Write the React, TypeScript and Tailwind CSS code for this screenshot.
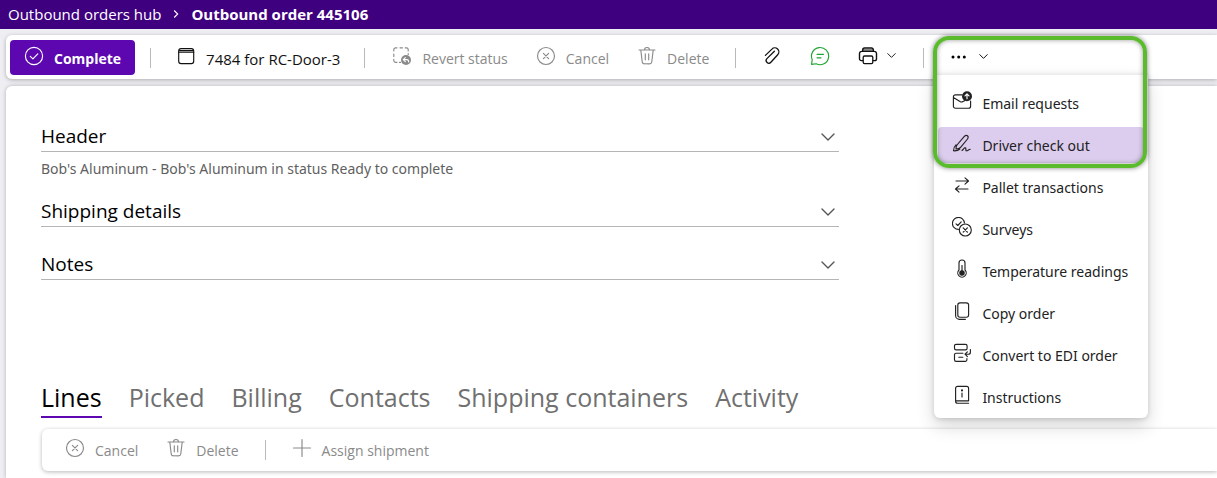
import type { ReactNode } from "react";

function Icon({ children }: { children: ReactNode }) {
  return (
    <svg
      viewBox="0 0 20 20"
      fill="none"
      stroke="currentColor"
      strokeWidth="1.15"
      strokeLinecap="round"
      strokeLinejoin="round"
      aria-hidden="true"
      className="h-5 w-5 shrink-0"
    >
      {children}
    </svg>
  );
}

function Chevron({ className = "" }: { className?: string }) {
  return (
    <svg viewBox="0 0 14 8" fill="none" stroke="currentColor" strokeLinecap="round" strokeLinejoin="round" aria-hidden="true" className={`shrink-0 ${className}`}>
      <path d="M1 1l6 6 6-6" />
    </svg>
  );
}

const CancelIcon = () => (
  <Icon>
    <circle cx="10" cy="10" r="8.5" />
    <path d="M7.4 7.4l5.2 5.2M12.6 7.4l-5.2 5.2" />
  </Icon>
);

const TrashIcon = () => (
  <Icon>
    <path d="M2 4h16M7.5 4a2.5 2.5 0 0 1 5 0M3.8 4l1.4 11.7a2.4 2.4 0 0 0 2.4 2.1h4.8a2.4 2.4 0 0 0 2.4-2.1L16.2 4M8.3 7.8v6M11.7 7.8v6" />
  </Icon>
);

function Divider() {
  return <span className="h-5 w-px shrink-0 bg-[#b9b9b9]" />;
}

function Tool({ icon, label, disabled = false }: { icon: ReactNode; label: string; disabled?: boolean }) {
  return (
    <button
      type="button"
      disabled={disabled}
      className={`flex shrink-0 items-center gap-[10px] whitespace-nowrap ${disabled ? "text-[#8a8a8a]" : "text-[15px] text-[#111]"}`}
    >
      <span className="pb-1">{icon}</span>
      <span className="pt-0.5">{label}</span>
    </button>
  );
}

const menu: { label: string; icon: ReactNode; active?: boolean }[] = [
  {
    label: "Email requests",
    icon: (
      <Icon>
        <path d="M10 3.8H3.4a2 2 0 0 0-2 2v9.4a2 2 0 0 0 2 2h13.2a2 2 0 0 0 2-2V10M1.4 6.5l6.6 4.1a3 3 0 0 0 3 0l2-1.2" />
        <circle cx="15" cy="5.2" r="5" fill="currentColor" stroke="none" />
        <path d="M15 7.7V2.9M13 4.9l2-2 2 2" stroke="white" />
      </Icon>
    ),
  },
  {
    label: "Driver check out",
    active: true,
    icon: (
      <Icon>
        <path d="M5 12l7.3-8.6c2.4-2.4 5-.2 3.2 2.6l-6.9 8.3c-1.2 1.4-2.6 1.6-4.6 1.7 0-1.8 0-2.7 1-4zM4 11.8c-1.6 1.5-2.5 3.4-2.5 6 3 .2 5-.5 6.3-1.800M10 17.5c1.4-1 2-2.9 3.3-2.8 1.4.2-.3 3 1.3 3.1 1.2 0 1.8-1.2 3.6-1.5" />
      </Icon>
    ),
  },
  {
    label: "Pallet transactions",
    icon: (
      <Icon>
        <path d="M4 6h12.5M13 2.8L16.5 6 13 9.2M16 14H3.5M7 10.8L3.5 14 7 17.2" />
      </Icon>
    ),
  },
  {
    label: "Surveys",
    icon: (
      <Icon>
        <path d="M6.4 12.4A6 6 0 1 1 12.4 6M4 6.8l1.8 1.7 3.4-3.7" />
        <circle cx="13.3" cy="13" r="6" />
        <path d="M11.2 10.9l4.2 4.2M15.4 10.9l-4.2 4.2" />
      </Icon>
    ),
  },
  {
    label: "Temperature readings",
    icon: (
      <Icon>
        <path d="M7 11V4a3 3 0 0 1 6 0v7a4.2 4.2 0 1 1-6 0z" />
        <circle cx="10" cy="14" r="2.2" fill="currentColor" />
        <path d="M10 13V6.5" />
      </Icon>
    ),
  },
  {
    label: "Copy order",
    icon: (
      <Icon>
        <rect x="5.8" y="1.8" width="10.8" height="14.4" rx="2.2" />
        <path d="M3.6 4.5v10a3.8 3.8 0 0 0 3.8 3.8h6" />
      </Icon>
    ),
  },
  {
    label: "Convert to EDI order",
    icon: (
      <Icon>
        <rect x="2.5" y="1.3" width="12.6" height="5.6" rx="1.6" />
        <path d="M11 10.2H4.1a1.6 1.6 0 0 0-1.6 1.6v5a1.6 1.6 0 0 0 1.6 1.6h9.2a1.6 1.6 0 0 0 1.6-1.6v-1.3M6.8 14.2h4M18.4 6.5v2.7a2 2 0 0 1-2 2h-3.2M15.4 8.8L13 11.2l2.4 2.4" />
      </Icon>
    ),
  },
  {
    label: "Instructions",
    icon: (
      <Icon>
        <path d="M3.6 16.2V3.4a2 2 0 0 1 2-2h9a2 2 0 0 1 2 2v12.4h-13M3.6 16.2a2 2 0 0 0 2 2h11M10 8v4" />
        <circle cx="10" cy="5.4" r="0.5" fill="currentColor" />
      </Icon>
    ),
  },
];

function MoreMenu() {
  return (
    <div className="relative flex shrink-0 items-center self-stretch">
      <div className="absolute -left-[17px] top-[38px] z-10 w-[214px] rounded-b-md border-t border-[#ececec] bg-white pb-[3px] pt-[10px] shadow-[0_8px_18px_rgba(0,0,0,0.16),0_1px_5px_rgba(0,0,0,0.14)]">
        <ul className="flex flex-col gap-[6px]">
          {menu.map((item) => (
            <li key={item.label} className="px-1">
              <button
                type="button"
                className={`flex h-9 w-full items-center gap-[10px] whitespace-nowrap rounded pl-[14px] font-['Noto_Sans','Open_Sans',sans-serif] text-[#222] ${item.active ? "bg-[#dccdee]" : ""}`}
              >
                <span className="pb-1">{item.icon}</span>
                <span className="pt-0.5">{item.label}</span>
              </button>
            </li>
          ))}
        </ul>
      </div>
      <div className="pointer-events-none absolute -left-[18px] top-0 z-20 h-[132px] w-[214px] rounded-2xl border-4 border-[#5abb2c] shadow-[0_0_5px_rgba(0,0,0,0.5),inset_0_0_5px_rgba(0,0,0,0.4)]" />
      <button type="button" aria-label="More actions" aria-expanded="true" className="flex items-center gap-3 pb-[2px] text-black">
        <svg viewBox="0 0 16 4" fill="currentColor" aria-hidden="true" className="h-1 w-4">
          <circle cx="2" cy="2" r="1.5" />
          <circle cx="7.7" cy="2" r="1.5" />
          <circle cx="13.3" cy="2" r="1.5" />
        </svg>
        <Chevron className="h-[5px] w-[9px] stroke-[1.5]" />
      </button>
    </div>
  );
}

function Section({ title, children }: { title: string; children?: ReactNode }) {
  return (
    <section>
      <h2>
        <button type="button" className="flex h-[30px] w-full items-center justify-between border-b border-[#b5b5b5] pr-1 text-[19px] leading-none text-black">
          <span>{title}</span>
          <Chevron className="h-2 w-[14px] stroke-[1.4] text-[#555]" />
        </button>
      </h2>
      {children}
    </section>
  );
}

const tabs = ["Lines", "Picked", "Billing", "Contacts", "Shipping containers", "Activity"];

export default function App() {
  return (
    <div className="flex min-h-screen flex-col overflow-hidden bg-[#efeef3] font-['Open_Sans','Noto_Sans',sans-serif] text-[14px] leading-5">
      <nav aria-label="Breadcrumb" className="flex h-[29px] items-center bg-[#3f007f] pb-0.5 pl-2 text-[15px] text-white">
        <a href="#hub">Outbound orders hub</a>
        <svg viewBox="0 0 6 8" fill="none" stroke="currentColor" aria-hidden="true" className="mx-3 h-2 w-[6px]">
          <path d="M1.2.5L4.7 4 1.2 7.5" strokeWidth="1.1" />
        </svg>
        <span aria-current="page" className="font-bold">Outbound order 445106</span>
      </nav>

      <div className="relative z-10 ml-[6px] mt-[6px] flex h-11 items-center rounded-l-md bg-white pl-1 pt-px shadow-[0_1px_4px_rgba(0,0,0,0.28)]">
        <button type="button" className="flex h-[35px] shrink-0 items-center gap-[10px] rounded bg-[#5c07b0] px-[14px] font-bold text-white">
          <span className="pb-1">
            <Icon>
              <circle cx="10" cy="10" r="8.6" />
              <path d="M6.3 10.3l2.6 2.5 4.9-5" />
            </Icon>
          </span>
          <span className="pt-0.5">Complete</span>
        </button>
        <div className="ml-[15px] mr-[25px] flex"><Divider /></div>
        <Tool
          label="7484 for RC-Door-3"
          icon={
            <Icon>
              <rect x="2.7" y="2.6" width="15" height="15" rx="2.4" />
              <path d="M2.7 6.2h15M3.5 4.6h13.4" />
            </Icon>
          }
        />
        <div className="ml-6 mr-[27px] flex"><Divider /></div>
        <div className="flex items-center gap-[28px]">
          <Tool
            disabled
            label="Revert status"
            icon={
              <Icon>
                <path d="M1.8 5V3.6a1.8 1.8 0 0 1 1.8-1.8H5M8 1.8h2.5M13.2 1.8h1.2a1.8 1.8 0 0 1 1.8 1.8V5M1.8 8v2.5M1.8 13.2v1.4a1.8 1.8 0 0 0 1.8 1.8H5M16.2 7.6v1M7.5 16.4h1" />
                <circle cx="14" cy="14" r="5" fill="currentColor" stroke="none" />
                <path d="M13.3 11.6l-2 2 2 2M11.5 13.6h3.3c1.4 0 1.9.9 1.9 2.4" stroke="white" />
              </Icon>
            }
          />
          <Tool disabled label="Cancel" icon={<CancelIcon />} />
          <Tool disabled label="Delete" icon={<TrashIcon />} />
        </div>
        <div className="mx-[26px] flex"><Divider /></div>
        <div className="flex items-center gap-[28px] pb-1">
          <button type="button" aria-label="Attachments" className="text-[#111]">
            <Icon>
              <path d="M3.4 9.4l6.5-6.3a4 4 0 0 1 5.8 5.6L8.9 16.3a2.7 2.7 0 0 1-4-3.7l7.5-7.4" strokeWidth="1.3" />
            </Icon>
          </button>
          <button type="button" aria-label="Comments" className="text-[#1fa535]">
            <Icon>
              <path d="M1.6 18.4l.6-4.8A8.6 8.6 0 1 1 6.2 17.8zM7 8.3h6.5M7 11.8h4" />
            </Icon>
          </button>
          <button type="button" aria-label="Print" className="flex items-center gap-[9px] text-[#111]">
            <Icon>
              <path d="M4.7 5.4V3.8a1.8 1.8 0 0 1 1.8-1.8h7a1.8 1.8 0 0 1 1.8 1.8v1.6M4.7 14.6H3.4a1.9 1.9 0 0 1-1.9-1.9V7.6a2.2 2.2 0 0 1 2.2-2.2h12.6a2.2 2.2 0 0 1 2.2 2.2v5.1a1.9 1.9 0 0 1-1.9 1.9h-1.3" strokeWidth="1.4" />
              <rect x="5.2" y="10" width="9.6" height="7.6" rx="1.4" strokeWidth="1.3" />
              <path d="M5 4h10" />
            </Icon>
            <Chevron className="h-[5px] w-[9px] stroke-[1.5]" />
          </button>
        </div>
        <div className="mx-[27px] flex"><Divider /></div>
        <MoreMenu />
      </div>

      <main className="ml-[6px] mt-[7px] flex-1 rounded-tl-md bg-white pb-[7px] pl-[35px] pt-9 shadow-[0_0_4px_rgba(0,0,0,0.25)]">
        <div className="flex w-[798px] max-w-full flex-col gap-[23px]">
          <Section title="Header">
            <p className="-mb-[5px] mt-[7px] font-['Noto_Sans','Open_Sans',sans-serif] text-[#5f5f5f]">Bob's Aluminum - Bob's Aluminum in status Ready to complete</p>
          </Section>
          <Section title="Shipping details" />
          <Section title="Notes" />
        </div>

        <div role="tablist" className="mt-[100px] flex gap-[27px] text-[25px] leading-[34px]">
          {tabs.map((tab, i) => (
            <button
              key={tab}
              type="button"
              role="tab"
              aria-selected={i === 0}
              className={`shrink-0 whitespace-nowrap border-b-2 pb-0.5 ${i === 0 ? "border-[#5c07b0] text-black" : "border-transparent text-[#707070]"}`}
            >
              {tab}
            </button>
          ))}
        </div>

        <div className="ml-px mt-[11px] flex h-[42px] items-center rounded-l-md bg-white pl-[23px] shadow-[0_1px_4px_rgba(0,0,0,0.28)]">
          <div className="flex items-center gap-[28px]">
            <Tool disabled label="Cancel" icon={<CancelIcon />} />
            <Tool disabled label="Delete" icon={<TrashIcon />} />
          </div>
          <div className="mx-[26px] flex"><Divider /></div>
          <Tool disabled label="Assign shipment" icon={<Icon><path d="M10 1.5v17M1.5 10h17" /></Icon>} />
        </div>
      </main>
    </div>
  );
}
